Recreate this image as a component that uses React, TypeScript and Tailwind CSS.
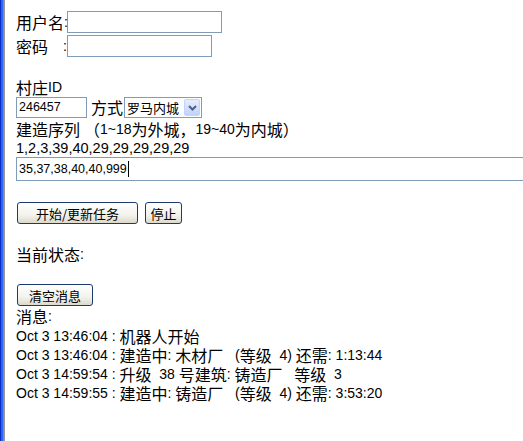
import React from "react";

const CJK = /([\u2000-\u206f\u3000-\u9fff\uff00-\uffef]+)/;

function Mixed({ text }: { text: string }) {
  const parts = text.split(CJK);
  return (
    <>
      {parts.map((p, i) =>
        p === "" ? null : CJK.test(p) ? (
          <span key={i} className="inline-block h-[18px] overflow-visible text-[16px] leading-[18px] font-['Noto_Sans_CJK_SC',sans-serif]">
            {p}
          </span>
        ) : (
          <span key={i} className="inline-block h-[18px] whitespace-pre leading-[18px]">{p}</span>
        )
      )}
    </>
  );
}

function XpButton({ label, w }: { label: string; w: string }) {
  return (
    <button
      className={`${w} h-[22px] rounded-[3px] border border-[#1c3a6e] bg-[linear-gradient(to_bottom,#ffffff,#f3f2ec_60%,#dcd9cc)] text-[13px] font-['Noto_Sans_CJK_SC',sans-serif] text-black leading-none flex items-center justify-center`}
    >
      {label}
    </button>
  );
}

export default function App() {
  const msgs = [
    "Oct 3 13:46:04 : 机器人开始",
    "Oct 3 13:46:04 : 建造中: 木材厂   (等级  4) 还需: 1:13:44",
    "Oct 3 14:59:54 : 升级  38 号建筑: 铸造厂   等级  3",
    "Oct 3 14:59:55 : 建造中: 铸造厂   (等级  4) 还需: 3:53:20",
  ];
  return (
    <div className="w-[523px] h-[441px] overflow-hidden flex bg-white text-black font-['Liberation_Sans',sans-serif] text-[14px]">
      <div className="w-[5px] h-full shrink-0 bg-[linear-gradient(to_right,#0a2fc0_0px,#0a2fc0_1px,#2463f4_1px,#2a6cff_3px,#5b8de8_3px,#5b8de8_4px,#9a9a9a_4px,#9a9a9a_5px)]" />
      <div className="flex flex-col pt-[11px] pl-[11px] min-w-0">
        <div className="flex items-center h-[22px]">
          <span className="w-[51px] shrink-0 flex justify-between whitespace-nowrap leading-[18px]">
            <Mixed text="用户名" />
            <span>:</span>
          </span>
          <div className="w-[155px] h-[22px] border border-[#7f9db9] bg-white" />
        </div>
        <div className="flex items-center h-[22px] mt-[2px]">
          <span className="w-[51px] shrink-0 flex justify-between whitespace-nowrap leading-[18px]">
            <Mixed text="密码" />
            <span>:</span>
          </span>
          <div className="w-[145px] h-[22px] border border-[#7f9db9] bg-white" />
        </div>
        <div className="h-[18px] mt-[21px] leading-[18px] flex items-center">
          <Mixed text="村庄ID" />
        </div>
        <div className="flex items-center h-[21px] mt-[1px]">
          <div className="w-[71px] h-[21px] border border-[#7f9db9] bg-white flex items-center pl-[2px] text-[12.5px] leading-none">
            246457
          </div>
          <span className="ml-[4px] mr-[1px] leading-[18px]">
            <Mixed text="方式" />
          </span>
          <div className="w-[78px] h-[21px] border border-[#7f9db9] bg-white flex items-center justify-between pl-[2px] pr-[1px]">
            <span className="text-[13px] font-['Noto_Sans_CJK_SC',sans-serif] leading-none">罗马内城</span>
            <span className="w-[16px] h-[17px] rounded-[2px] border border-[#c3d3fd] bg-[linear-gradient(to_bottom,#e6eefc,#c1d3fb)] flex items-center justify-center">
              <svg width="9" height="6" viewBox="0 0 9 6">
                <path d="M1 1 L4.5 4.5 L8 1" stroke="#4d6185" strokeWidth="2" fill="none" />
              </svg>
            </span>
          </div>
        </div>
        <div className="h-[18px] mt-[2px] leading-[18px] flex items-center whitespace-pre">
          <Mixed text="建造序列 （1~18为外城，19~40为内城）" />
        </div>
        <div className="h-[18px] mt-[1px] leading-[18px] flex items-center text-[14.5px]">
          1,2,3,39,40,29,29,29,29,29
        </div>
        <div className="w-[520px] h-[24px] border border-[#7f9db9] bg-white flex items-center pl-[2px] text-[12.5px] leading-none shrink-0">
          <span>35,37,38,40,40,999</span>
          <span className="w-px h-[16px] bg-black ml-px" />
        </div>
        <div className="flex items-center gap-[7px] mt-[21px] ml-px">
          <XpButton label="开始/更新任务" w="w-[121px]" />
          <XpButton label="停止" w="w-[37px]" />
        </div>
        <div className="h-[18px] mt-[21px] leading-[18px] flex items-center">
          <Mixed text="当前状态:" />
        </div>
        <div className="flex mt-[21px] ml-px">
          <XpButton label="清空消息" w="w-[76px]" />
        </div>
        <div className="h-[18px] mt-[1px] leading-[18px] flex items-center">
          <Mixed text="消息:" />
        </div>
        <div className="flex flex-col mt-[1px]">
          {msgs.map((m, i) => (
            <div key={i} className="h-[19px] leading-[19px] flex items-center whitespace-pre">
              <Mixed text={m} />
            </div>
          ))}
        </div>
      </div>
    </div>
  );
}
